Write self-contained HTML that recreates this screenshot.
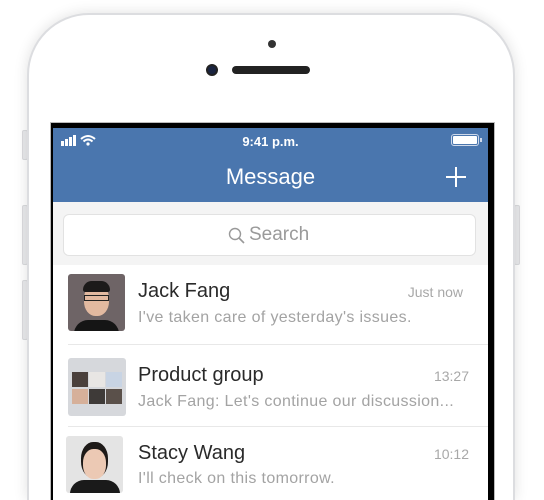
<!DOCTYPE html>
<html><head><meta charset="utf-8"><style>
*{margin:0;padding:0;box-sizing:border-box}
html,body{width:544px;height:500px;overflow:hidden}
body{background:#fff;font-family:"Liberation Sans",Arial,sans-serif;position:relative}
.abs{position:absolute}
.phone{left:27px;top:13px;width:488px;height:487px;border-radius:62px 62px 0 0;background:#fff;border:2px solid #dcdde0;border-bottom:none;box-shadow:0 0 14px rgba(0,0,0,.12)}
.btn{background:#e9eaec;border:1px solid #dadbde}
.bezel{left:50px;top:122px;width:445px;height:378px;background:#000;border:1px solid #bbb;border-bottom:none}
.screen{left:53px;top:128px;width:435px;height:372px;background:#fff;overflow:hidden}
.hdr{left:0;top:0;width:435px;height:74px;background:#4a76ae;color:#fff}
.name{font-size:20px;color:#2a2a2a}
.sub{font-size:16px;color:#a3a3a3;letter-spacing:0.35px}
.time{font-size:14px;color:#a8a8a8;text-align:right}
.sep{height:1px;background:#e8e8e8}
.av{border-radius:3px;overflow:hidden}
</style></head><body>
<div class="abs btn" style="left:22px;top:130px;width:6px;height:30px;border-radius:2px"></div>
<div class="abs btn" style="left:22px;top:205px;width:6px;height:60px;border-radius:2px"></div>
<div class="abs btn" style="left:22px;top:280px;width:6px;height:60px;border-radius:2px"></div>
<div class="abs btn" style="left:514px;top:205px;width:6px;height:60px;border-radius:2px"></div>
<div class="abs phone"></div>
<div class="abs" style="left:268px;top:40px;width:8px;height:8px;border-radius:50%;background:#333"></div>
<div class="abs" style="left:206px;top:64px;width:12px;height:12px;border-radius:50%;background:#1a2440;border:2px solid #222"></div>
<div class="abs" style="left:232px;top:66px;width:78px;height:8px;border-radius:4px;background:#222"></div>
<div class="abs bezel"></div>
<div class="abs screen">
 <div class="abs hdr">
  <svg class="abs" style="left:8px;top:6px" width="40" height="14"><rect x="0" y="7" width="3" height="5" fill="#fff"/><rect x="4" y="5" width="3" height="7" fill="#fff"/><rect x="8" y="3" width="3" height="9" fill="#fff"/><rect x="12" y="1" width="3" height="11" fill="#fff"/>
  <path d="M20 5 Q27 -1 34 5 M22.5 7.5 Q27 3.5 31.5 7.5" stroke="#fff" stroke-width="2" fill="none"/><circle cx="27" cy="10" r="1.6" fill="#fff"/></svg>
  <div class="abs" style="left:0;width:435px;top:6px;text-align:center;font-size:13px;font-weight:bold">9:41 p.m.</div>
  <div class="abs" style="left:398px;top:6px;width:28px;height:12px;border:1px solid #cfd9ea;border-radius:3px;padding:1px"><div style="background:#fff;width:100%;height:100%;border-radius:1px"></div></div>
  <div class="abs" style="left:427px;top:10px;width:2px;height:4px;background:#cfd9ea"></div>
  <div class="abs" style="left:0;width:435px;top:36px;text-align:center;font-size:22px">Message</div>
  <div class="abs" style="left:402px;top:39px;width:2px;height:20px;background:#fff"></div>
  <div class="abs" style="left:393px;top:48px;width:20px;height:2px;background:#fff"></div>
 </div>
 <div class="abs" style="left:0;top:74px;width:435px;height:63px;background:#f4f4f4"></div>
 <div class="abs" style="left:10px;top:86px;width:413px;height:42px;background:#fff;border:1px solid #e2e2e2;border-radius:6px"></div>
 <svg class="abs" style="left:175px;top:99px" width="18" height="18"><circle cx="7" cy="7" r="5.5" stroke="#999" stroke-width="1.4" fill="none"/><path d="M11 11 L16 16" stroke="#999" stroke-width="1.6"/></svg>
 <div class="abs" style="left:196px;top:96px;font-size:19px;color:#9a9a9a">Search</div>

 <div class="abs av" style="left:15px;top:146px;width:57px;height:57px;background:#6e6466">
  <div class="abs" style="left:16px;top:10px;width:25px;height:32px;border-radius:45%;background:#e2b9a0"></div>
  <div class="abs" style="left:15px;top:7px;width:27px;height:11px;border-radius:12px 12px 3px 3px;background:#1c1a1a"></div>
  <div class="abs" style="left:16px;top:21px;width:25px;height:6px;border:1.5px solid #222"></div>
  <div class="abs" style="left:6px;top:46px;width:45px;height:14px;border-radius:14px 14px 0 0;background:#151515"></div>
 </div>
 <div class="abs name" style="left:85px;top:152px">Jack Fang</div>
 <div class="abs time" style="left:310px;width:100px;top:156px">Just now</div>
 <div class="abs sub" style="left:85px;top:181px">I've taken care of yesterday's issues.</div>
 <div class="abs sep" style="left:15px;top:216px;width:420px"></div>

 <div class="abs av" style="left:15px;top:230px;width:58px;height:58px;background:#d6d8dc">
  <div class="abs" style="left:4px;top:14px;width:16px;height:15px;background:#4a403c"></div>
  <div class="abs" style="left:21px;top:14px;width:16px;height:15px;background:#e8e6e4"></div>
  <div class="abs" style="left:38px;top:14px;width:16px;height:15px;background:#c8d4e4"></div>
  <div class="abs" style="left:4px;top:31px;width:16px;height:15px;background:#d6b09a"></div>
  <div class="abs" style="left:21px;top:31px;width:16px;height:15px;background:#3e3a38"></div>
  <div class="abs" style="left:38px;top:31px;width:16px;height:15px;background:#5a504a"></div>
 </div>
 <div class="abs name" style="left:85px;top:236px">Product group</div>
 <div class="abs time" style="left:316px;width:100px;top:240px">13:27</div>
 <div class="abs sub" style="left:85px;top:265px">Jack Fang: Let's continue our discussion...</div>
 <div class="abs sep" style="left:15px;top:298px;width:420px"></div>

 <div class="abs av" style="left:13px;top:308px;width:57px;height:57px;background:#e4e4e4">
  <div class="abs" style="left:15px;top:6px;width:27px;height:36px;border-radius:45%;background:#1e1a18"></div>
  <div class="abs" style="left:17px;top:13px;width:23px;height:30px;border-radius:45%;background:#ecc9b4"></div>
  <div class="abs" style="left:4px;top:44px;width:50px;height:14px;border-radius:14px 14px 0 0;background:#1a1a1a"></div>
 </div>
 <div class="abs name" style="left:85px;top:314px">Stacy Wang</div>
 <div class="abs time" style="left:316px;width:100px;top:318px">10:12</div>
 <div class="abs sub" style="left:85px;top:342px">I'll check on this tomorrow.</div>
</div>
</body></html>
